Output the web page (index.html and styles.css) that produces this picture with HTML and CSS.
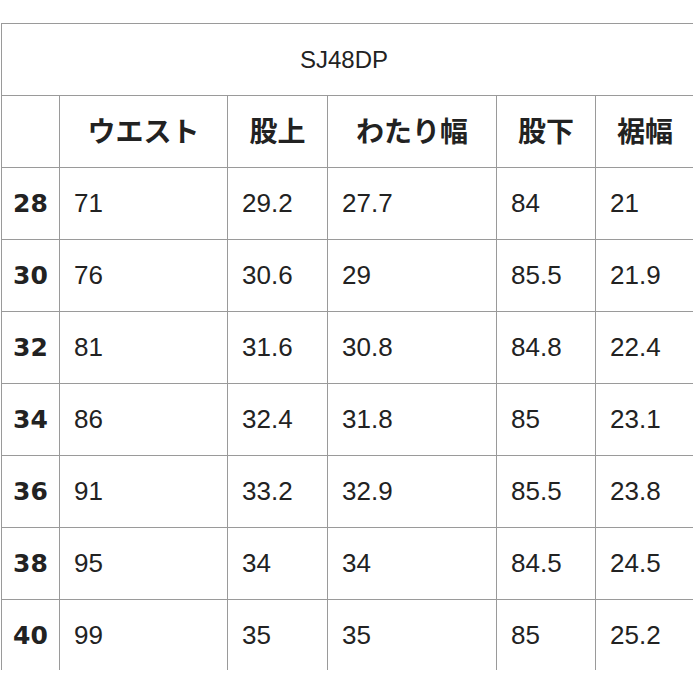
FILE: index.html
```html
<!DOCTYPE html>
<html lang="ja">
<head>
<meta charset="utf-8">
<link rel="stylesheet" href="styles.css">
</head>
<body>
<div class="frame">
<table class="size-table">
<colgroup>
<col class="c0"><col class="c1"><col class="c2"><col class="c3"><col class="c4"><col class="c5">
</colgroup>
<tr><td class="title" colspan="6">SJ48DP</td></tr>
<tr class="head"><th></th><th>ウエスト</th><th>股上</th><th>わたり幅</th><th>股下</th><th>裾幅</th></tr>
<tr><th class="size">28</th><td>71</td><td>29.2</td><td>27.7</td><td>84</td><td>21</td></tr>
<tr><th class="size">30</th><td>76</td><td>30.6</td><td>29</td><td>85.5</td><td>21.9</td></tr>
<tr><th class="size">32</th><td>81</td><td>31.6</td><td>30.8</td><td>84.8</td><td>22.4</td></tr>
<tr><th class="size">34</th><td>86</td><td>32.4</td><td>31.8</td><td>85</td><td>23.1</td></tr>
<tr><th class="size">36</th><td>91</td><td>33.2</td><td>32.9</td><td>85.5</td><td>23.8</td></tr>
<tr><th class="size">38</th><td>95</td><td>34</td><td>34</td><td>84.5</td><td>24.5</td></tr>
<tr><th class="size">40</th><td>99</td><td>35</td><td>35</td><td>85</td><td>25.2</td></tr>
</table>
</div>
</body>
</html>
```
FILE: styles.css
```css
html, body {
  margin: 0;
  padding: 0;
  background: #fff;
  overflow: hidden;
}
.frame {
  margin: 23px 0 0 1px;
  height: 647px;
  width: 700px;
  overflow: hidden;
}
.size-table {
  border-collapse: collapse;
  table-layout: fixed;
  width: 693px;
  font-family: "Liberation Sans", "Noto Sans CJK JP", sans-serif;
  color: #222;
}
.c0 { width: 58px; }
.c1 { width: 168px; }
.c2 { width: 100px; }
.c3 { width: 169px; }
.c4 { width: 99px; }
.c5 { width: 99px; }
.size-table td, .size-table th {
  border: 1px solid #9a9a9a;
  height: 72px;
  padding: 0 0 0 14px;
  box-sizing: border-box;
  text-align: left;
  vertical-align: middle;
  font-size: 26px;
  font-weight: normal;
  white-space: nowrap;
}
.size-table td.title {
  text-align: center;
  padding: 0 8px 0 0;
  font-size: 24px;
}
.head th {
  text-align: center;
  padding: 0 0 4px 0;
  font-family: "Noto Sans CJK JP", sans-serif;
  font-weight: bold;
  font-size: 28px;
}
.size-table th.size {
  text-align: center;
  padding: 0;
  font-family: "DejaVu Sans", sans-serif;
  font-weight: bold;
  font-size: 25px;
}
```
